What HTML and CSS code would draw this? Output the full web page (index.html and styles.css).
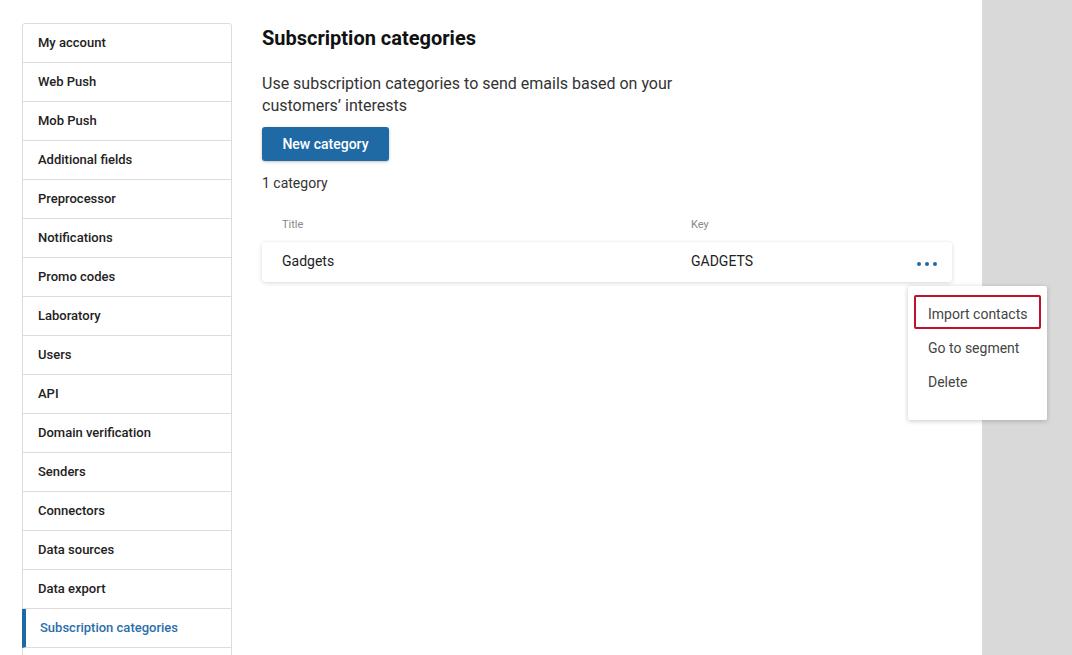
FILE: index.html
```html
<!DOCTYPE html>
<html lang="en">
<head>
<meta charset="utf-8">
<title>Subscription categories</title>
<link rel="stylesheet" href="styles.css">
</head>
<body>
<div class="page">
  <div class="content">
    <nav class="sidebar">
      <a class="nav-item">My account</a>
      <a class="nav-item">Web Push</a>
      <a class="nav-item">Mob Push</a>
      <a class="nav-item">Additional fields</a>
      <a class="nav-item">Preprocessor</a>
      <a class="nav-item">Notifications</a>
      <a class="nav-item">Promo codes</a>
      <a class="nav-item">Laboratory</a>
      <a class="nav-item">Users</a>
      <a class="nav-item">API</a>
      <a class="nav-item">Domain verification</a>
      <a class="nav-item">Senders</a>
      <a class="nav-item">Connectors</a>
      <a class="nav-item">Data sources</a>
      <a class="nav-item">Data export</a>
      <a class="nav-item active">Subscription categories</a>
      <a class="nav-item empty"></a>
    </nav>
    <main class="main">
      <h1 class="title">Subscription categories</h1>
      <p class="intro">Use subscription categories to send emails based on your customers’ interests</p>
      <button class="btn-primary">New category</button>
      <div class="count">1 category</div>
      <div class="table">
        <div class="thead">
          <span class="col-title">Title</span>
          <span class="col-key">Key</span>
        </div>
        <div class="row">
          <span class="col-title">Gadgets</span>
          <span class="col-key">GADGETS</span>
          <span class="dots"><i></i><i></i><i></i></span>
        </div>
      </div>
    </main>
  </div>
  <div class="side-gray"></div>
  <div class="menu">
    <div class="menu-item highlighted">Import contacts</div>
    <div class="menu-item">Go to segment</div>
    <div class="menu-item">Delete</div>
  </div>
</div>
</body>
</html>
```
FILE: styles.css
```css
html, body {
  margin: 0;
  padding: 0;
  height: 100%;
  overflow: hidden;
}
body {
  font-family: Roboto, "Liberation Sans", Arial, sans-serif;
  color: #222;
  background: #fff;
}
.page {
  position: relative;
  display: flex;
  height: 655px;
}
.content {
  width: 982px;
  display: flex;
  align-items: flex-start;
  background: #fff;
}
.side-gray {
  flex: 1;
  background: #d9d9d9;
}
.sidebar {
  margin: 23px 0 0 22px;
  width: 208px;
  border: 1px solid #dcdcdc;
  border-radius: 3px 3px 0 0;
  display: flex;
  flex-direction: column;
}
.nav-item {
  display: flex;
  align-items: center;
  padding-left: 15px;
  padding-bottom: 1px;
  box-sizing: content-box;
  height: 37px;
  font-size: 13px;
  font-weight: 500;
  color: #222;
  border-bottom: 1px solid #dcdcdc;
}
.nav-item.active {
  color: #2a6faa;
  border-left: 4px solid #1f6aa5;
  padding-left: 14px;
  margin-left: -1px;
}
.main {
  margin-left: 30px;
  padding-top: 24px;
  width: 690px;
}
.title {
  margin: 0;
  font-size: 20px;
  line-height: 28px;
  font-weight: 700;
  color: #111;
}
.intro {
  margin: 21px 0 0;
  font-size: 16px;
  line-height: 22px;
  color: #333;
  max-width: 430px;
}
.btn-primary {
  margin-top: 10px;
  width: 127px;
  height: 34px;
  border: none;
  border-radius: 3px;
  background: #1f6aa5;
  color: #fff;
  font-family: Roboto, "Liberation Sans", Arial, sans-serif;
  font-size: 14px;
  font-weight: 500;
  box-shadow: 0 1px 3px rgba(0,0,0,0.25);
  display: block;
}
.count {
  margin-top: 12px;
  font-size: 14px;
  line-height: 20px;
  color: #333;
}
.table {
  margin-top: 24px;
}
.thead {
  display: flex;
  font-size: 11px;
  line-height: 16px;
  color: #888;
  padding-left: 20px;
}
.col-title {
  width: 409px;
}
.col-key {
  flex: 1;
}
.row {
  margin-top: 9px;
  display: flex;
  align-items: center;
  height: 40px;
  padding-left: 20px;
  padding-right: 15px;
  border-radius: 4px;
  background: #fff;
  box-shadow: 0 1px 4px rgba(0,0,0,0.16);
  font-size: 14px;
  color: #222;
  padding-bottom: 2px;
  box-sizing: border-box;
}
.dots {
  display: flex;
  gap: 4px;
  padding-top: 6px;
}
.dots i {
  width: 4px;
  height: 4px;
  border-radius: 50%;
  background: #1f6aa5;
}
.menu {
  position: absolute;
  left: 908px;
  top: 286px;
  width: 139px;
  height: 134px;
  box-sizing: border-box;
  padding: 9px 6px 0;
  background: #fff;
  border-radius: 2px;
  box-shadow: 0 1px 5px rgba(0,0,0,0.22);
}
.menu-item {
  height: 34px;
  box-sizing: border-box;
  display: flex;
  align-items: center;
  padding-left: 14px;
  padding-top: 4px;
  font-size: 14px;
  color: #444;
}
.menu-item.highlighted {
  border: 2px solid #c0102a;
  border-radius: 2px;
  padding-left: 12px;
  padding-top: 4px;
}
```
